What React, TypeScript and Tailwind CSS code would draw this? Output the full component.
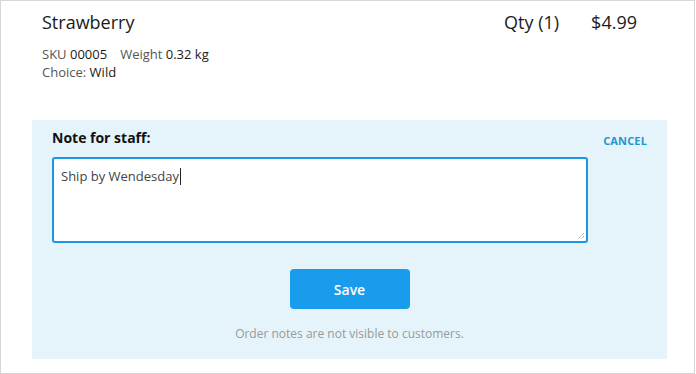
export default function App() {
  return (
    <div
      className="h-[374px] w-[695px] border border-[#d6d6d6] bg-white text-[#1b1b1b]"
      style={{ fontFamily: '"Open Sans", "Liberation Sans", sans-serif' }}
    >
      {/* item header */}
      <div className="flex justify-between pl-[41px] pr-[57px] pt-[9px]">
        <div>
          <div className="text-[18px] leading-[24px]">Strawberry</div>
          <div className="mt-[11px] text-[13px] leading-[18px]">
            <span className="text-[#555]">SKU</span> 00005
            <span className="ml-[13px] text-[#555]">Weight</span> 0.32 kg
          </div>
          <div className="text-[13px] leading-[18px]">
            <span className="text-[#555]">Choice:</span> Wild
          </div>
        </div>
        <div className="flex gap-[32px] text-[18px] leading-[24px]">
          <span>Qty (1)</span>
          <span>$4.99</span>
        </div>
      </div>

      {/* note panel */}
      <div className="ml-[31px] mt-[39px] h-[239px] w-[635px] bg-[#e5f4fa] px-5 pt-[8px]">
        <div className="flex h-[20px] items-start justify-between">
          <span className="text-[14px] font-bold leading-[20px] text-[#111]">Note for staff:</span>
          <button className="mt-[3px] text-[11px] font-bold leading-[20px] tracking-[0.15px] text-[#2098cf]">
            CANCEL
          </button>
        </div>
        <div className="relative mt-[9px] h-[86px] w-[536px] rounded-[3px] border-2 border-[#1b97e4] bg-white px-[7px] pt-[4px]">
          <span className="text-[13px] leading-[18px] text-[#444]">Ship by Wendesday</span>
          <span className="ml-px inline-block h-[17px] w-px translate-y-[4px] bg-[#222]" />
          <svg className="absolute bottom-px right-px" width="9" height="9" viewBox="0 0 9 9">
            <path d="M8 2 L2 8 M8 5 L5 8" stroke="#888" strokeWidth="1" strokeDasharray="1 1" fill="none" />
          </svg>
        </div>
        <div className="mt-[26px] flex justify-center">
          <button className="h-[40px] w-[120px] rounded-[4px] bg-[#1a9cec] text-[14px] font-semibold text-white">
            Save
          </button>
        </div>
        <p className="mt-[17px] text-center text-[12px] leading-[16px] text-[#999]">
          Order notes are not visible to customers.
        </p>
      </div>
    </div>
  );
}
